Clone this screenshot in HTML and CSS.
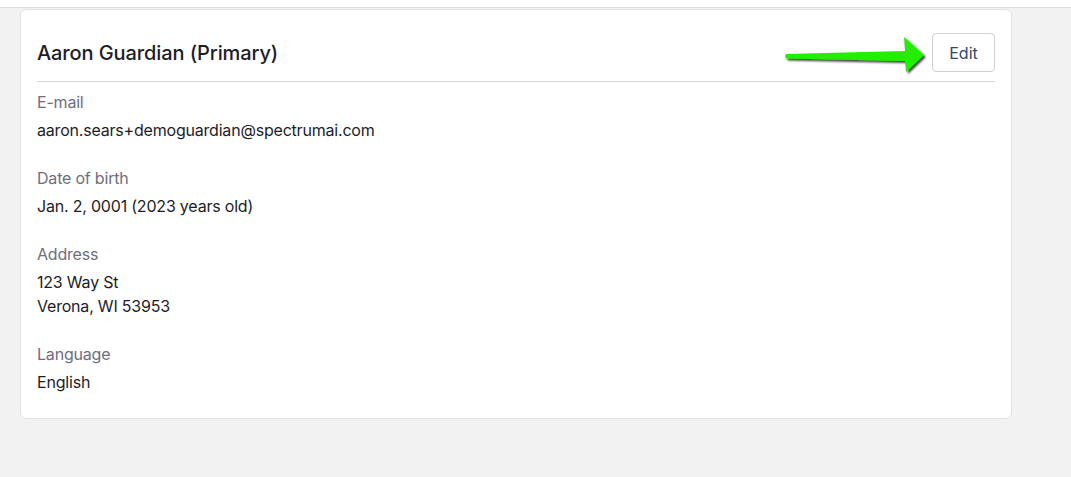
FILE: index.html
```html
<!DOCTYPE html>
<html>
<head>
<meta charset="utf-8">
<link rel="stylesheet" href="styles.css">
</head>
<body>
<div class="topbar"></div>
<main class="page">
  <section class="card">
    <header class="card-head">
      <h2 class="title">Aaron Guardian (Primary)</h2>
      <div class="actions">
        <svg class="arrow" width="143" height="44" viewBox="0 0 143 44">
          <defs>
            <filter id="sh" x="-10%" y="-30%" width="130%" height="170%">
              <feDropShadow dx="2" dy="2" stdDeviation="1.2" flood-color="#000" flood-opacity="0.75"/>
            </filter>
          </defs>
          <polygon filter="url(#sh)" fill="#22ee00" points="2,23 3,21 122,18 121,4 141,22 123,39 122,28 3,25.5"/>
        </svg>
        <button class="btn">Edit</button>
      </div>
    </header>
    <dl class="fields">
      <div class="field"><dt>E-mail</dt><dd>aaron.sears+demoguardian@spectrumai.com</dd></div>
      <div class="field"><dt>Date of birth</dt><dd>Jan. 2, 0001 (2023 years old)</dd></div>
      <div class="field"><dt>Address</dt><dd>123 Way St<br>Verona, WI 53953</dd></div>
      <div class="field"><dt>Language</dt><dd>English</dd></div>
    </dl>
  </section>
</main>
</body>
</html>
```
FILE: styles.css
```css
* { box-sizing: border-box; }
html, body { margin: 0; padding: 0; }
body {
  background: #f2f2f2;
  font-family: Inter, "Noto Sans", sans-serif;
  color: #1d1d28;
  width: 1071px;
  height: 477px;
  overflow: hidden;
}
.topbar {
  height: 8px;
  background: #fff;
  border-bottom: 1px solid #dcdcdc;
}
.page {
  padding: 1px 60px 0 20px;
}
.card {
  width: 992px;
  background: #fff;
  border: 1px solid #e2e2e6;
  border-radius: 6px;
  padding: 23px 16px 24px 16px;
}
.card-head {
  display: flex;
  align-items: center;
  justify-content: space-between;
  border-bottom: 1px solid #d6d6da;
  padding-bottom: 9px;
}
.title {
  margin: 0;
  font-size: 20px;
  font-weight: 500;
  letter-spacing: -0.1px;
  color: #1d1d28;
}
.actions {
  display: flex;
  align-items: center;
}
.arrow {
  display: block;
  margin: -4px 6px -8px 0;
}
.btn {
  font-family: inherit;
  font-size: 16px;
  font-weight: 400;
  color: #2a4a70;
  background: #fff;
  border: 1px solid #cfcfd4;
  border-radius: 4px;
  width: 63px;
  height: 39px;
  padding: 0;
}
.fields {
  margin: 0;
  padding-top: 8px;
}
.field { margin-bottom: 24px; }
.field:last-child { margin-bottom: 0; }
dt {
  font-size: 16px;
  line-height: 24px;
  color: #6e6e7d;
  margin-bottom: 4px;
  letter-spacing: -0.2px;
}
dd {
  margin: 0;
  font-size: 16px;
  line-height: 24px;
  color: #1d1d28;
  letter-spacing: -0.2px;
}
```
